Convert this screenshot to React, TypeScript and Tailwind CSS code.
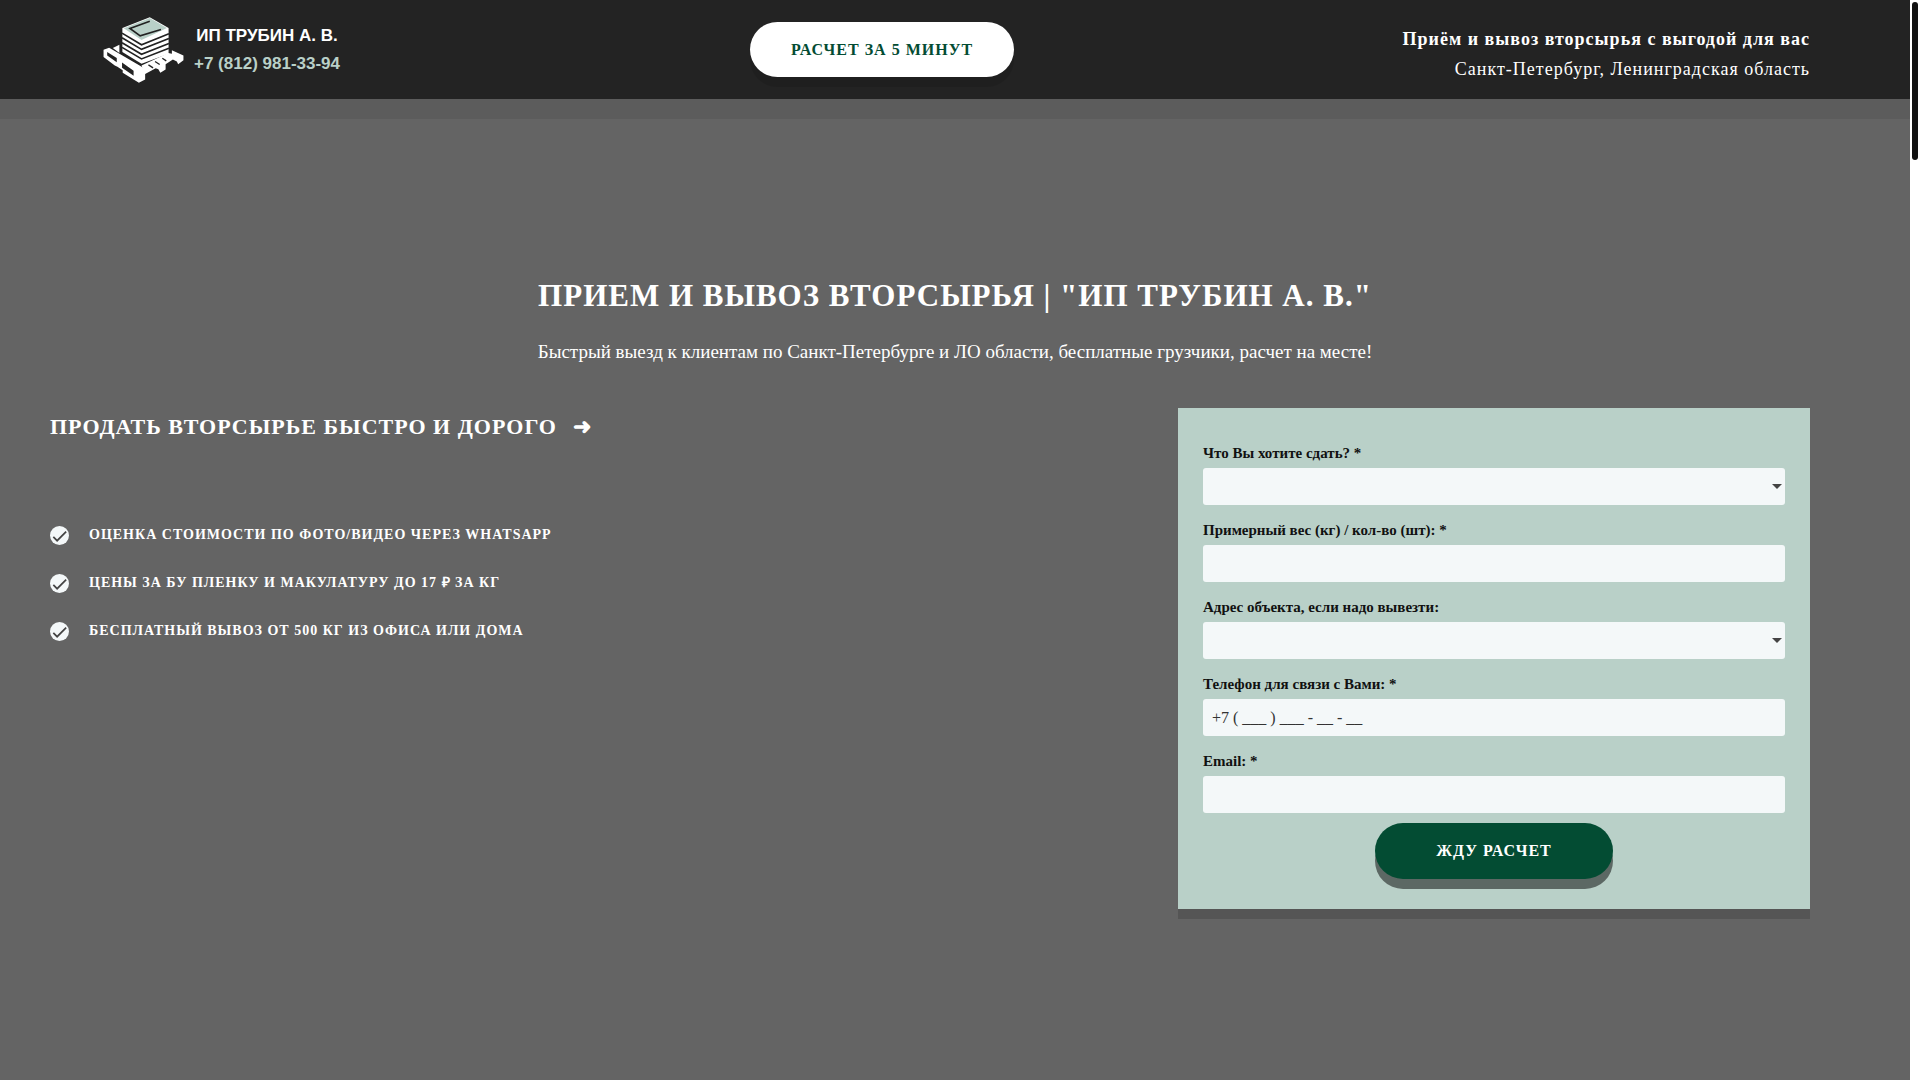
const benefits = [
  "Оценка стоимости по фото/видео через WhatsApp",
  "Цены за бу пленку и макулатуру до 17 ₽ за кг",
  "Бесплатный вывоз от 500 кг из офиса или дома",
]

type Field = {
  id:           string
  label:        string
  kind:         "select" | "text" | "tel" | "email"
  placeholder?: string
}

const fields: Field[] = [
  { id: "material", label: "Что Вы хотите сдать? *",            kind: "select" },
  { id: "weight",   label: "Примерный вес (кг) / кол-во (шт): *", kind: "text" },
  { id: "address",  label: "Адрес объекта, если надо вывезти:", kind: "select" },
  { id: "phone",    label: "Телефон для связи с Вами: *",       kind: "tel", placeholder: "+7 ( ___ ) ___ - __ - __" },
  { id: "email",    label: "Email: *",                          kind: "email" },
]

function PalletLogo() {
  return (
    <svg viewBox="36 46 250 206" className="h-[68px] w-[83px] shrink-0" aria-hidden="true">
      {/* pallet */}
      <path
        fill="#fff"
        fillRule="evenodd"
        d="M40 148L57 142L166 206V238L147 248L98 218V210L82 200L74 196L40 170ZM51 155V166L80 186V173ZM96 187V203L131 227V212Z"
      />
      <path fill="#fff" d="M68 143L88 133V158Z" />
      <path
        fill="#fff"
        d="M155 196L236 158L247 160L247 150L282 166V180L266 192L262 184L250 178L228 192L228 208L212 218L206 207L198 204L166 222Z"
      />
      <path stroke="#222" strokeWidth="4" d="M176 194L190 203M196 184L210 193M218 174L230 182" />
      {/* stack of sheets */}
      <path fill="#fff" d="M97 82L180 50L237 82V160L155 191L97 155Z" />
      <path fill="#b9d0c8" d="M101 83L180 52L232 82L155 119Z" />
      <path fill="none" stroke="#222" strokeWidth="5" d="M180 62L120 84L151 106L214 87" />
      <path
        fill="none"
        stroke="#222"
        strokeWidth="5"
        d="M96 98L155 133L238 100M96 112L155 147L238 114M96 127L155 162L238 129M96 141L155 176L238 144"
      />
    </svg>
  )
}

function CheckIcon() {
  return (
    <svg viewBox="0 0 20 20" className="size-[19px] shrink-0" aria-hidden="true">
      <circle cx="10" cy="10" r="10" fill="#f4f8f9" />
      <path fill="none" stroke="#444" strokeWidth="1.8" d="M3.5 11.5L7.5 15.5L17 6" />
    </svg>
  )
}

function FormField({ id, label, kind, placeholder }: Field) {
  const box = "h-[37px] w-full rounded-[3px] bg-[#f4f8f9] px-[9px] text-base text-[#333] outline-none"
  return (
    <div className="flex flex-col">
      <label htmlFor={id} className="h-[30px] text-[15px] leading-[30px] font-bold text-[#111]">
        {label}
      </label>
      {kind === "select" ? (
        <div className="relative">
          <select id={id} defaultValue="" className={`${box} block appearance-none`}>
            <option value=""></option>
          </select>
          <svg
            viewBox="0 0 10 5"
            className="pointer-events-none absolute top-4 right-[3px] h-[5px] w-[10px]"
            aria-hidden="true"
          >
            <path fill="#444" d="M0 0H10L5 5Z" />
          </svg>
        </div>
      ) : (
        <input id={id} type={kind} placeholder={placeholder} className={`${box} placeholder:text-[#333]`} />
      )}
    </div>
  )
}

export default function App() {
  return (
    <div className="flex min-h-screen bg-[#646464] font-['Liberation_Serif',serif] text-white">
      <div className="flex min-w-0 flex-1 flex-col">

        <header className="flex h-[99px] items-center justify-between bg-[#232323] px-[100px] shadow-[0_20px_0_rgba(0,0,0,0.07)]">
          <a href="#" className="flex w-[266px] items-center gap-[9px] pl-[2px] font-['Liberation_Sans',sans-serif] text-[17px] leading-7 font-bold">
            <PalletLogo />
            <span className="flex flex-col items-center">
              <span>ИП ТРУБИН А. В.</span>
              <span className="text-[#b9d0c8]">+7 (812) 981-33-94</span>
            </span>
          </a>
          <button
            type="button"
            className="h-[55px] w-[264px] rounded-full bg-white text-base font-bold tracking-[1px] text-[#034c33] uppercase shadow-[0_10px_0_rgba(0,0,0,0.1)]"
          >
            Расчет за 5 минут
          </button>
          <div className="w-[412px] pt-2 text-right text-lg leading-[30px] tracking-[1px]">
            <p className="font-bold">Приём и вывоз вторсырья с выгодой для вас</p>
            <p>Санкт-Петербург, Ленинградская область</p>
          </div>
        </header>

        <main className="flex flex-col pt-[173px] pr-[100px] pb-12 pl-[50px]">
          <div className="-mr-[50px] text-center">
            <h1 className="text-[31px] leading-[48px] font-bold tracking-[1px] uppercase">
              Прием и вывоз вторсырья | "ИП Трубин А. В."
            </h1>
            <p className="mt-[15px] text-[19px] leading-[34px]">
              Быстрый выезд к клиентам по Санкт-Петербурге и ЛО области, бесплатные грузчики, расчет на месте!
            </p>
          </div>

          <div className="mt-[39px] flex items-start justify-between gap-12">
            <section>
              <h2 className="flex gap-4 text-[22px] leading-[38px] font-bold tracking-[1px] uppercase">
                Продать вторсырье быстро и дорого <span>➜</span>
              </h2>
              <ul className="mt-[65px] flex flex-col">
                {benefits.map(b => (
                  <li key={b} className="flex h-12 items-center gap-5 text-sm font-bold tracking-[1px] uppercase">
                    <CheckIcon />
                    {b}
                  </li>
                ))}
              </ul>
            </section>

            <form
              onSubmit={e => e.preventDefault()}
              className="w-[632px] bg-[#b9d0c8] px-[25px] pt-[30px] pb-[30px] shadow-[0_10px_0_rgba(0,0,0,0.15)]"
            >
              <div className="flex flex-col gap-[10px]">
                {fields.map(f => <FormField key={f.id} {...f} />)}
                <button
                  type="submit"
                  className="h-14 w-[238px] self-center rounded-full bg-[#034c33] text-base font-bold tracking-[1px] uppercase shadow-[0_10px_0_rgba(0,0,0,0.5)]"
                >
                  Жду расчет
                </button>
              </div>
            </form>
          </div>
        </main>
      </div>

      {/* scroll track */}
      <div className="w-[10px] bg-white px-[2px] pt-[2px]">
        <div className="h-[158px] rounded-full bg-[#111]" />
      </div>
    </div>
  )
}
